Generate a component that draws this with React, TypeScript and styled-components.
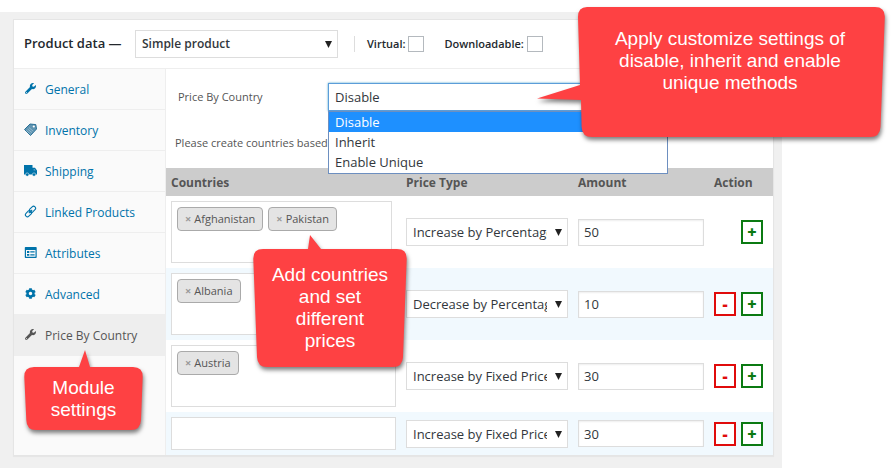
import React from "react";
import styled, { createGlobalStyle, css } from "styled-components";
import { FaCog, FaWrench } from "react-icons/fa";

const GlobalStyle = createGlobalStyle`
  *, *::before, *::after { box-sizing: border-box; }
  html, body, #root { height: 100%; }
  body {
    margin: 0;
    background: #fff;
    color: #444;
    font: 12px/20px "Open Sans", "Noto Sans", sans-serif;
  }
  button, input, select { font: inherit; color: inherit; margin: 0; }
`;

const Page = styled.div`
  position: relative;
  min-height: 100%;
  display: flex;
  padding: 12px 111px 0 0;
`;

const AdminArea = styled.main`
  flex: 1;
  min-width: 0;
  padding: 7px 8px 13px 13px;
  background: #f0f0f0;
`;

const Panel = styled.section`
  border: 1px solid #e5e5e5;
  background: #fff;
  box-shadow: 0 1px 1px rgba(0, 0, 0, 0.04);
`;

const PanelHeader = styled.header`
  display: flex;
  align-items: center;
  height: 49px;
  padding: 0 10px;
  border-bottom: 1px solid #eee;
  color: #23282d;
  font-weight: 600;
`;

const Title = styled.h2`
  flex: none;
  margin: 0;
  padding-bottom: 2px;
  font-size: 13px;
  line-height: 20px;
  font-weight: 600;
  white-space: nowrap;
  width: 111px;
`;

const SelectWrap = styled.span<{ $wide?: boolean }>`
  position: relative;
  display: block;
  width: ${(p) => (p.$wide ? "203px" : "100%")};
`;

const SelectBox = styled.select<{ $strong?: boolean }>`
  appearance: none;
  display: block;
  width: 100%;
  height: 28px;
  padding: 0 20px 0 6px;
  border: 1px solid #ddd;
  border-radius: 0;
  background: #fff;
  color: #32373c;
  font-size: 13px;
  ${(p) =>
    p.$strong &&
    css`
      font-size: 12px;
      font-weight: 600;
    `}
`;

const Arrow = styled.svg`
  position: absolute;
  right: 6px;
  top: 11px;
  width: 7px;
  height: 7px;
  fill: #222;
  pointer-events: none;
`;

const Divider = styled.span`
  width: 1px;
  height: 16px;
  margin: 0 12px 0 16px;
  background: #ddd;
`;

const Flags = styled.div`
  display: flex;
  align-items: center;
  gap: 20px;
`;

const Flag = styled.label`
  display: flex;
  align-items: center;
  gap: 3px;
  font-size: 11px;
  white-space: nowrap;
`;

const Check = styled.input`
  appearance: none;
  width: 16px;
  height: 16px;
  border: 1px solid #b4b9be;
  background: #fff;
`;

const Columns = styled.div`
  display: flex;
`;

const Sidebar = styled.nav`
  flex: 0 0 152px;
  border-right: 1px solid #eee;
  background: #fafafa;
`;

const TabLink = styled.a<{ $active?: boolean }>`
  display: flex;
  align-items: center;
  gap: 8px;
  height: 41px;
  padding: 2px 10px 0;
  border-bottom: 1px solid #eee;
  background: ${(p) => (p.$active ? "#eee" : "transparent")};
  color: ${(p) => (p.$active ? "#555" : "#0073aa")};
  font-size: 12px;
  text-decoration: none;
  white-space: nowrap;
  svg {
    width: 13px;
    height: 13px;
    flex: none;
    margin-bottom: 4px;
  }
  svg.small {
    padding: 1px;
  }
`;

const Content = styled.div`
  flex: 1;
  min-width: 0;
`;

const Field = styled.div`
  display: flex;
  align-items: center;
  padding: 14px 105px 0 12px;
`;

const FieldLabel = styled.label`
  flex: 0 0 150px;
  color: #555;
  font-size: 11px;
`;

const Combo = styled.div`
  position: relative;
  flex: 1;
`;

const ComboSelect = styled(SelectBox)`
  border-color: #5b9dd9;
  box-shadow: 0 0 2px rgba(30, 140, 190, 0.8);
`;

const OptionList = styled.ul`
  position: absolute;
  z-index: 1;
  top: 28px;
  left: 0;
  right: 0;
  margin: 0;
  padding: 0 0 1px;
  border: 1px solid #6d8fc0;
  background: #fff;
  list-style: none;
`;

const Option = styled.li<{ $selected?: boolean }>`
  padding: 0 6px;
  font-size: 13px;
  line-height: 20px;
  color: ${(p) => (p.$selected ? "#fff" : "#32373c")};
  background: ${(p) => (p.$selected ? "#1e90ff" : "transparent")};
`;

const Hint = styled.p`
  margin: 22px 9px 15px;
  color: #555;
  font-size: 11px;
  line-height: 20px;
`;

const PriceTable = styled.table`
  width: 100%;
  table-layout: fixed;
  border-collapse: collapse;
`;

const HeadCell = styled.th<{ $width?: number }>`
  width: ${(p) => (p.$width ? `${p.$width}px` : "auto")};
  height: 28px;
  padding: 2px 5px 0;
  background: #ccc;
  color: #555;
  font-size: 12px;
  font-weight: 700;
  text-align: left;
`;

const Row = styled.tr`
  &:nth-child(even) {
    background: #f1f9fe;
  }
`;

const Cell = styled.td`
  padding: 5px;
  vertical-align: middle;
`;

const Countries = styled.div<{ $inset?: boolean; $empty?: boolean }>`
  display: flex;
  align-items: flex-start;
  gap: 5px;
  min-height: ${(p) => (p.$empty ? 33 : 62)}px;
  margin-right: ${(p) => (p.$inset ? 4 : 0)}px;
  padding: 5px;
  border: 1px solid #ddd;
  background: #fff;
`;

const Tag = styled.span`
  display: flex;
  align-items: center;
  height: 24px;
  padding: 0 7px;
  border: 1px solid #aaa;
  border-radius: 4px;
  background: #e4e4e4;
  color: #555;
  font-size: 11px;
`;

const RemoveTag = styled.button`
  padding: 0 3px 0 0;
  border: 0;
  background: none;
  color: #999;
  font-weight: 700;
`;

const Amount = styled.input`
  display: block;
  width: 100%;
  height: 27px;
  padding: 0 5px;
  border: 1px solid #ddd;
  background: #fff;
  box-shadow: inset 0 1px 2px rgba(0, 0, 0, 0.07);
  color: #32373c;
  font-size: 13px;
`;

const Actions = styled.div`
  display: flex;
  justify-content: flex-end;
  gap: 5px;
  padding-right: 5px;
`;

const ActionButton = styled.button<{ $tone: "red" | "green" }>`
  flex: none;
  width: 22px;
  height: 24px;
  padding: 0;
  border: 2px solid ${(p) => (p.$tone === "red" ? "#e00b0b" : "#0b7a12")};
  background: #fff;
  color: ${(p) => (p.$tone === "red" ? "#e00b0b" : "#0b7a12")};
  font-size: 16px;
  line-height: 20px;
  font-weight: 800;
`;

const Callout = styled.aside<{ $x: number; $y: number; $w: number; $h: number }>`
  position: absolute;
  z-index: 2;
  left: ${(p) => p.$x}px;
  top: ${(p) => p.$y}px;
  width: ${(p) => p.$w}px;
  height: ${(p) => p.$h}px;
`;

const CalloutShape = styled.svg`
  position: absolute;
  inset: 0;
  width: 100%;
  height: 100%;
  overflow: visible;
  fill: #fe4143;
  filter: drop-shadow(1px 3px 2px rgba(0, 0, 0, 0.5));
`;

const CalloutText = styled.p<{ $top: number; $left?: number }>`
  position: relative;
  margin: 0;
  padding: ${(p) => p.$top}px 0 0 ${(p) => p.$left ?? 0}px;
  color: #fff;
  font-family: "Liberation Sans", Arial, sans-serif;
  font-size: 19px;
  line-height: 22px;
  text-align: center;
  white-space: pre-line;
`;

const TagIcon = () => (
  <svg viewBox="0 0 13 13">
    <path d="M.5 6.500 6 1l5.800.6.7 4.400-6 6.500z" fill="#5f94b1" stroke="#2a7096" />
    <path d="m2.200 7.500 4.500 3.700M3.600 6l4.400 3.700M5 4.600l4.300 3.700" stroke="#a9cadb" strokeWidth=".7" />
    <circle cx="9.800" cy="3.500" r="1.100" fill="#fff" />
  </svg>
);

const TruckIcon = () => (
  <svg viewBox="0 0 13 13" fill="currentColor">
    <path d="M0 1h8.500v2.800H11L13 6.500v4H0z" />
    <path d="M9.600 4.900h1l1.100 1.700H9.600z" fill="#5a9fc3" />
    <circle cx="3.200" cy="10.600" r="1.700" stroke="#fafafa" strokeWidth=".5" />
    <circle cx="10" cy="10.600" r="1.700" stroke="#fafafa" strokeWidth=".5" />
  </svg>
);

const LinkIcon = () => (
  <svg viewBox="0 0 13 13" fill="none" stroke="currentColor" strokeWidth="1.100">
    <rect x="5" y="2.300" width="7" height="4" rx="2" transform="rotate(-45 8.500 4.300)" />
    <rect x="1" y="6.700" width="7" height="4" rx="2" transform="rotate(-45 4.500 8.700)" />
    <path d="m4.800 8.200 3.400-3.400" />
  </svg>
);

const AttributesIcon = () => (
  <svg viewBox="0 0 13 13" fill="currentColor">
    <path fillRule="evenodd" d="M1.500 1h10.500q.7 0 .7.700v9.600q0 .7-.7.700H1.500q-.7 0-.7-.7V1.700q0-.7.7-.7zM2 4v6.800h9.500V4z" />
    <path d="M3 5h2.300v2H3zM3 8h2.300v1.800H3zM6.300 5.300h4.300v1.200H6.300zM6.300 8.200h4.300v1.200H6.300z" />
  </svg>
);

const tabs = [
  { name: "General", icon: <FaWrench className="small" /> },
  { name: "Inventory", icon: <TagIcon /> },
  { name: "Shipping", icon: <TruckIcon /> },
  { name: "Linked Products", icon: <LinkIcon /> },
  { name: "Attributes", icon: <AttributesIcon /> },
  { name: "Advanced", icon: <FaCog className="small" /> },
  { name: "Price By Country", icon: <FaWrench className="small" />, active: true },
];

const rules = [
  { countries: ["Afghanistan", "Pakistan"], type: "Increase by Percentage", amount: "50" },
  { countries: ["Albania"], type: "Decrease by Percentage", amount: "10" },
  { countries: ["Austria"], type: "Increase by Fixed Price", amount: "30" },
  { countries: [], type: "Increase by Fixed Price", amount: "30" },
];

const priceTypes = [
  "Increase by Percentage",
  "Decrease by Percentage",
  "Increase by Fixed Price",
  "Decrease by Fixed Price",
];

const methods = ["Disable", "Inherit", "Enable Unique"];

const DownArrow = () => (
  <Arrow viewBox="0 0 7 7" aria-hidden="true">
    <path d="M0 0h7L3.500 7z" />
  </Arrow>
);

export default function App() {
  return (
    <>
      <GlobalStyle />
      <Page>
        <AdminArea>
          <Panel>
            <PanelHeader>
              <Title>Product data —</Title>
              <SelectWrap $wide>
                <SelectBox $strong aria-label="Product type">
                  <option>Simple product</option>
                </SelectBox>
                <DownArrow />
              </SelectWrap>
              <Divider />
              <Flags>
                <Flag>
                  Virtual: <Check type="checkbox" />
                </Flag>
                <Flag>
                  Downloadable: <Check type="checkbox" />
                </Flag>
              </Flags>
            </PanelHeader>
            <Columns>
              <Sidebar>
                {tabs.map((tab) => (
                  <TabLink key={tab.name} href="#" $active={tab.active}>
                    {tab.icon}
                    {tab.name}
                  </TabLink>
                ))}
              </Sidebar>
              <Content>
                <Field>
                  <FieldLabel htmlFor="method">Price By Country</FieldLabel>
                  <Combo>
                    <ComboSelect id="method" defaultValue="Disable">
                      {methods.map((m) => (
                        <option key={m}>{m}</option>
                      ))}
                    </ComboSelect>
                    <OptionList role="listbox" aria-label="Price By Country">
                      {methods.map((m, i) => (
                        <Option key={m} role="option" aria-selected={i === 0} $selected={i === 0}>
                          {m}
                        </Option>
                      ))}
                    </OptionList>
                  </Combo>
                </Field>
                <Hint>Please create countries based</Hint>
                <PriceTable>
                  <thead>
                    <tr>
                      <HeadCell>Countries</HeadCell>
                      <HeadCell $width={172}>Price Type</HeadCell>
                      <HeadCell $width={136}>Amount</HeadCell>
                      <HeadCell $width={64}>Action</HeadCell>
                    </tr>
                  </thead>
                  <tbody>
                    {rules.map((rule, i) => (
                      <Row key={i}>
                        <Cell>
                          <Countries $inset={i === 0} $empty={rule.countries.length === 0}>
                            {rule.countries.map((c) => (
                              <Tag key={c}>
                                <RemoveTag type="button" aria-label={`Remove ${c}`}>
                                  ×
                                </RemoveTag>
                                {c}
                              </Tag>
                            ))}
                          </Countries>
                        </Cell>
                        <Cell>
                          <SelectWrap>
                            <SelectBox aria-label="Price type" defaultValue={rule.type}>
                              {priceTypes.map((t) => (
                                <option key={t}>{t}</option>
                              ))}
                            </SelectBox>
                            <DownArrow />
                          </SelectWrap>
                        </Cell>
                        <Cell>
                          <Amount aria-label="Amount" defaultValue={rule.amount} />
                        </Cell>
                        <Cell>
                          <Actions>
                            {i > 0 && (
                              <ActionButton type="button" $tone="red">
                                -
                              </ActionButton>
                            )}
                            <ActionButton type="button" $tone="green">
                              +
                            </ActionButton>
                          </Actions>
                        </Cell>
                      </Row>
                    ))}
                  </tbody>
                </PriceTable>
              </Content>
            </Columns>
          </Panel>
        </AdminArea>

        <Callout $x={537} $y={7} $w={348} $h={130}>
          <CalloutShape viewBox="0 0 348 130" aria-hidden="true">
            <path d="M50 0H338Q348 0 347.800 10L343.500 120Q343 130 333 130H55Q45 130 44.600 120L44 93 0 91.500 43 78 41 10Q41 0 50 0z" />
          </CalloutShape>
          <CalloutText $top={21} $left={38}>
            {"Apply customize settings of\ndisable, inherit and enable\nunique methods"}
          </CalloutText>
        </Callout>
        <Callout $x={253} $y={235} $w={154} $h={132}>
          <CalloutShape viewBox="0 0 154 132" aria-hidden="true">
            <path d="M10 14H55L57 0 68 14H144Q154 14 153.700 24L150 122Q149.500 132 140 132H14Q4.500 132 4 122L.3 24Q0 14 10 14z" />
          </CalloutShape>
          <CalloutText $top={29}>{"Add countries\nand set\ndifferent\nprices"}</CalloutText>
        </Callout>
        <Callout $x={24} $y={350} $w={119} $h={80}>
          <CalloutShape viewBox="0 0 119 80" aria-hidden="true">
            <path d="M10 17H55L61 0 66 17H109Q119 17 118.700 27L117 70Q116.500 80 107 80H12Q2.500 80 2.300 70L.3 27Q0 17 10 17z" />
          </CalloutShape>
          <CalloutText $top={27}>{"Module\nsettings"}</CalloutText>
        </Callout>
      </Page>
    </>
  );
}
